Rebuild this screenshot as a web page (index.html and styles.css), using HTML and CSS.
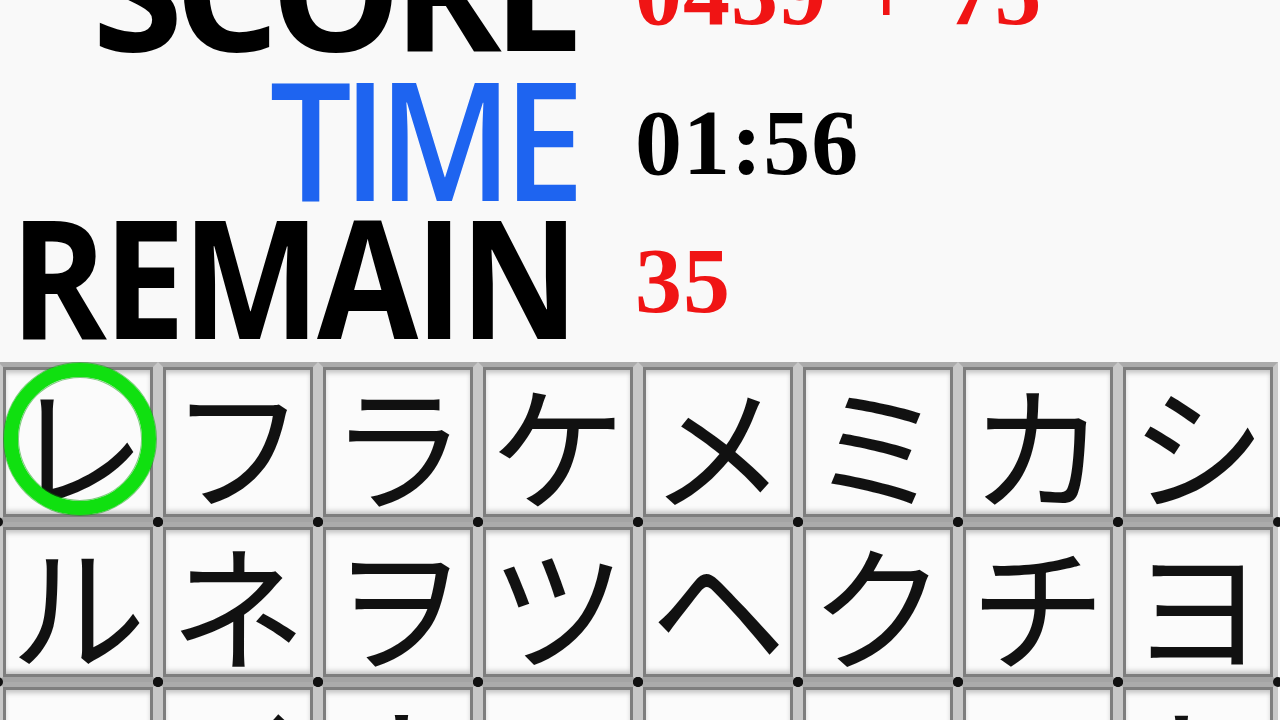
FILE: index.html
```html
<!DOCTYPE html>
<html lang="ja">
<head>
<meta charset="utf-8">
<title>Kana</title>
<link rel="stylesheet" href="styles.css">
</head>
<body>
<div class="stats">
  <div class="label score">SCORE</div>
  <div class="value red wide">0439 + 75</div>
  <div class="label time">TIME</div>
  <div class="value">01:56</div>
  <div class="label remain">REMAIN</div>
  <div class="value red">35</div>
</div>
<div class="board">
  <div class="cell"><span class="ring"></span>レ</div>
  <div class="cell">フ</div>
  <div class="cell">ラ</div>
  <div class="cell">ケ</div>
  <div class="cell">メ</div>
  <div class="cell">ミ</div>
  <div class="cell">カ</div>
  <div class="cell">シ</div>
  <div class="cell">ル</div>
  <div class="cell">ネ</div>
  <div class="cell">ヲ</div>
  <div class="cell">ツ</div>
  <div class="cell">ヘ</div>
  <div class="cell">ク</div>
  <div class="cell">チ</div>
  <div class="cell">ヨ</div>
  <div class="cell">マ</div>
  <div class="cell">イ</div>
  <div class="cell">ナ</div>
  <div class="cell">コ</div>
  <div class="cell">ロ</div>
  <div class="cell">ワ</div>
  <div class="cell">ス</div>
  <div class="cell">ト</div>
</div>
</body>
</html>
```
FILE: styles.css
```css
html, body {
  margin: 0;
  padding: 0;
  width: 1280px;
  height: 720px;
  overflow: hidden;
  background: #f9f9f9;
}

.stats {
  display: grid;
  grid-template-columns: 560px 1fr;
  grid-template-rows: 150px 138px 145px;
  column-gap: 75px;
  margin-top: -85px;
  margin-bottom: 14px;
}

.label {
  justify-self: end;
  font-family: "Open Sans", "Noto Sans", sans-serif;
  font-weight: 700;
  font-size: 165px;
  line-height: 145px;
  text-align: right;
  color: #000;
  white-space: nowrap;
  transform-origin: right center;
}

.label.score {
  letter-spacing: -9px;
  margin-right: -16px;
}

.label.time {
  color: #1e64f0;
  font-weight: 600;
  letter-spacing: -10px;
  margin-right: -16px;
  transform: scaleX(0.88);
}

.label.remain {
  font-weight: 700;
  letter-spacing: -4px;
  margin-right: -16px;
  transform: scaleX(0.89);
}

.value {
  font-family: "Liberation Serif", serif;
  font-weight: 700;
  font-size: 94px;
  line-height: 145px;
  letter-spacing: 1px;
  padding-top: 5px;
  color: #000;
  white-space: nowrap;
}

.value.wide {
  word-spacing: 8px;
}

.value.red {
  color: #f01414;
}

.board {
  display: grid;
  grid-template-columns: repeat(8, 160px);
  grid-auto-rows: 160px;
  margin-left: -2px;
}

.cell {
  position: relative;
  box-sizing: border-box;
  border: 5px solid;
  border-color: #ababab #c8c8c8 #a4a4a4 #c8c8c8;
  background: #fbfbfb;
  box-shadow:
    inset 0 0 0 3px #7e7e7e,
    inset 0 9px 5px -3px #c4c4c4,
    inset 0 -9px 5px -3px #c4c4c4,
    inset 6px 0 4px -3px #d4d4d4,
    inset -6px 0 4px -3px #d4d4d4;
  display: flex;
  align-items: center;
  justify-content: center;
  font-family: "Noto Sans CJK JP", sans-serif;
  font-size: 136px;
  line-height: 1;
  color: #111;
}

.cell::before,
.cell::after {
  content: "";
  position: absolute;
  bottom: -10px;
  width: 10px;
  height: 10px;
  border-radius: 50%;
  background: #111;
  z-index: 1;
}

.cell::before {
  left: -10px;
}

.cell::after {
  right: -10px;
}

.ring {
  position: absolute;
  left: 1px;
  top: -4px;
  width: 152px;
  height: 152px;
  box-sizing: border-box;
  border: 14px solid #10e010;
  border-radius: 50%;
  box-shadow: 0 0 0 1px rgba(0, 150, 0, 0.5), inset 0 0 0 1px rgba(0, 150, 0, 0.5);
}
```
